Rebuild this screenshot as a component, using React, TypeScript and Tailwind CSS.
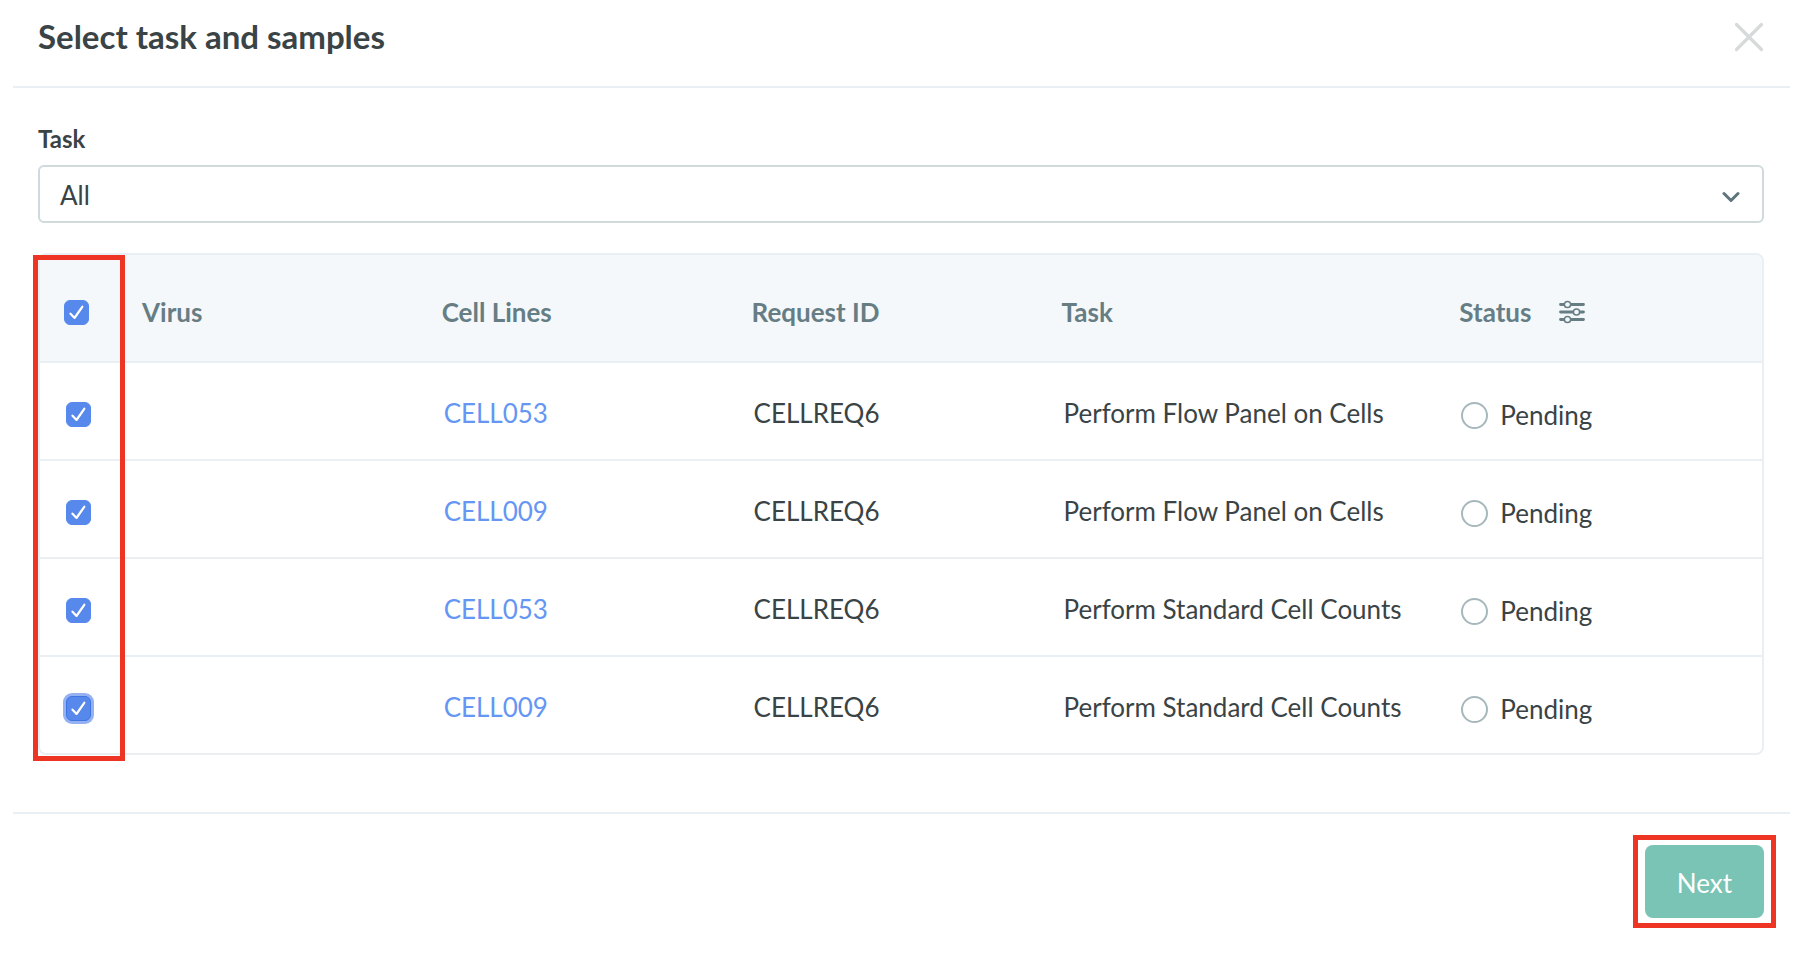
import React from 'react';

type Sample = {
  id: number;
  virus: string;
  cellLine: string;
  requestId: string;
  task: string;
  status: string;
};

const SAMPLES: Sample[] = [
  { id: 1, virus: '', cellLine: 'CELL053', requestId: 'CELLREQ6', task: 'Perform Flow Panel on Cells', status: 'Pending' },
  { id: 2, virus: '', cellLine: 'CELL009', requestId: 'CELLREQ6', task: 'Perform Flow Panel on Cells', status: 'Pending' },
  { id: 3, virus: '', cellLine: 'CELL053', requestId: 'CELLREQ6', task: 'Perform Standard Cell Counts', status: 'Pending' },
  { id: 4, virus: '', cellLine: 'CELL009', requestId: 'CELLREQ6', task: 'Perform Standard Cell Counts', status: 'Pending' },
];

const TASKS = ['All', 'Perform Flow Panel on Cells', 'Perform Standard Cell Counts'];

type CheckboxProps = {
  label: string;
  checked: boolean;
  autoFocus?: boolean;
  onChange: (checked: boolean) => void;
};

const Checkbox: React.FC<CheckboxProps> = ({ label, checked, autoFocus, onChange }) => (
  <span className="relative block size-[25px]">
    <input
      type="checkbox"
      aria-label={label}
      checked={checked}
      autoFocus={autoFocus}
      onChange={(e) => onChange(e.target.checked)}
      className="block size-[25px] appearance-none rounded-[6px] border border-[#b5c2c6] outline-none checked:border-[#5789ec] checked:bg-[#5789ec] focus:border-[#3f74e3] focus:ring-3 focus:ring-[#94b2f2]"
    />
    {checked && (
      <svg viewBox="0 0 25 25" className="pointer-events-none absolute inset-0 size-[25px]" fill="none">
        <path d="M6.5 14 L10.5 18.5 L18.5 7" stroke="#3f6cc4" strokeOpacity="0.5" strokeWidth="2.4" strokeLinecap="round" strokeLinejoin="round" />
        <path d="M6.5 13.7 L10.5 18 L18.3 6.8" stroke="#fff" strokeWidth="2.3" strokeLinecap="round" strokeLinejoin="round" />
      </svg>
    )}
  </span>
);

const FilterIcon = () => (
  <svg viewBox="0 0 26 24" className="h-6 w-[26px]" fill="none" stroke="#677d84">
    <path d="M1.5 4.5h23M1.5 12h23M1.5 19.5h23" strokeWidth="2.8" strokeLinecap="round" />
    <g fill="#f4f8fb" strokeWidth="1.5">
      <circle cx="8.5" cy="4.5" r="3.1" />
      <circle cx="17.5" cy="12" r="3.1" />
      <circle cx="8.5" cy="19.5" r="3.1" />
    </g>
  </svg>
);

export default function App() {
  const [task, setTask] = React.useState('All');
  const [selected, setSelected] = React.useState<number[]>(SAMPLES.map((s) => s.id));

  const rows = SAMPLES.filter((s) => task === 'All' || s.task === task);
  const allSelected = rows.every((s) => selected.includes(s.id));

  const toggleAll = (checked: boolean) => {
    setSelected(checked ? rows.map((s) => s.id) : []);
  };

  const toggleRow = (id: number, checked: boolean) => {
    setSelected(checked ? [...selected, id] : selected.filter((s) => s !== id));
  };

  return (
    <main className="min-h-screen bg-white pr-[10px] pl-[13px] font-['Lato','Liberation_Sans',sans-serif] text-[26px] leading-8 text-[#3a4345]">
      <header className="flex h-[88px] items-start justify-between border-b-2 border-[#e9eff2] pt-4 pr-[26px] pl-[25px]">
        <h1 className="text-[33px] leading-10 font-bold">Select task and samples</h1>
        <button type="button" aria-label="Close" className="pt-[6px]">
          <svg viewBox="0 0 30 30" className="size-[30px]" fill="none" stroke="#d7dada" strokeWidth="3.2" strokeLinecap="round">
            <path d="M2.5 2.5 L27.5 27.5 M27.5 2.5 L2.5 27.5" />
          </svg>
        </button>
      </header>

      <section className="pt-[35px] pr-[26px] pb-[57px] pl-[25px]">
        <label htmlFor="task" className="block text-2xl leading-8 font-bold">
          Task
        </label>
        <div className="relative mt-[10px]">
          <select
            id="task"
            value={task}
            onChange={(e) => setTask(e.target.value)}
            className="block h-[58px] w-full appearance-none rounded-md border-2 border-[#cfdadd] bg-white pt-[2px] pr-16 pl-5 outline-none"
          >
            {TASKS.map((t) => (
              <option key={t} value={t}>
                {t}
              </option>
            ))}
          </select>
          <svg viewBox="0 0 18 12" className="pointer-events-none absolute top-[26px] right-6 h-3 w-[18px]" fill="none">
            <path d="M2 2.5 L9 9.5 L16 2.5" stroke="#5f757d" strokeWidth="3" strokeLinecap="round" strokeLinejoin="round" />
          </svg>
        </div>

        <div className="relative mt-[30px]">
          <div className="overflow-hidden rounded-lg border-2 border-[#e9eff2]">
            <table className="w-full table-fixed border-separate border-spacing-0 text-left">
              <colgroup>
                <col className="w-[90px]" />
                <col className="w-[17.4%]" />
                <col className="w-[18%]" />
                <col className="w-[18%]" />
                <col className="w-[23.1%]" />
                <col />
              </colgroup>
              <thead className="bg-[#f4f8fb] text-[#677d84]">
                <tr className="h-[108px] *:border-b-2 *:border-[#e9eff2] *:px-3 *:pt-2 *:font-bold">
                  <th>
                    <div className="pl-3">
                      <Checkbox label="Select all samples" checked={allSelected} onChange={toggleAll} />
                    </div>
                  </th>
                  <th>Virus</th>
                  <th>Cell Lines</th>
                  <th>Request ID</th>
                  <th>Task</th>
                  <th>
                    <div className="flex items-center gap-7">
                      Status
                      <button type="button" aria-label="Filter by status">
                        <FilterIcon />
                      </button>
                    </div>
                  </th>
                </tr>
              </thead>
              <tbody>
                {rows.map((s, i) => (
                  <tr key={s.id} className="h-[98px] *:border-b-2 *:border-[#e9eff2] *:px-[14px] *:pt-1 last:h-24 last:*:border-b-0">
                    <td>
                      <div className="pt-[2px] pl-3">
                        <Checkbox
                          label={`Select ${s.cellLine}, ${s.task}`}
                          checked={selected.includes(s.id)}
                          autoFocus={i === rows.length - 1}
                          onChange={(checked) => toggleRow(s.id, checked)}
                        />
                      </div>
                    </td>
                    <td>{s.virus}</td>
                    <td>
                      <a href={`#${s.cellLine}`} className="text-[#6596f3]">
                        {s.cellLine}
                      </a>
                    </td>
                    <td>{s.requestId}</td>
                    <td className="whitespace-nowrap">{s.task}</td>
                    <td>
                      <div className="flex items-center gap-3 pt-1">
                        <span className="size-[27px] rounded-full border-2 border-[#a7b8bd]" />
                        {s.status}
                      </div>
                    </td>
                  </tr>
                ))}
              </tbody>
            </table>
          </div>
          {/* highlight around the checkbox column */}
          <div className="pointer-events-none absolute top-[2px] -bottom-[6px] -left-[5px] w-[92px] border-[5px] border-[#ee3524]" />
        </div>
      </section>

      <footer className="flex justify-end border-t-2 border-[#e9eff2] pt-[31px] pr-[26px] pb-9 pl-[25px]">
        <div className="relative">
          <button type="button" className="block h-[73px] rounded-lg bg-[#79c4b4] px-8 pt-[2px] text-white">
            Next
          </button>
          <div className="pointer-events-none absolute -inset-x-3 -inset-y-[10px] border-[5px] border-[#ee3524]" />
        </div>
      </footer>
    </main>
  );
}
